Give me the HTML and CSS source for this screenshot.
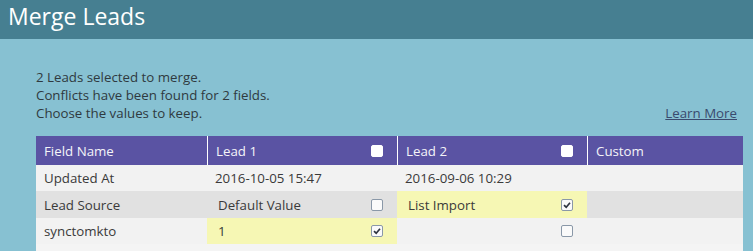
FILE: index.html
```html
<!DOCTYPE html>
<html lang="en">
<head>
<meta charset="UTF-8">
<meta name="viewport" content="width=device-width, initial-scale=1.0">
<title>Merge Leads</title>
<link rel="stylesheet" href="styles.css">
</head>
<body>
<div class="title-bar">
<h1>Merge Leads</h1>
</div>
<div class="content">
<div class="intro">
<div class="intro-text">
<p>2 Leads selected to merge.</p>
<p>Conflicts have been found for 2 fields.</p>
<p>Choose the values to keep.</p>
</div>
<a href="#" class="learn-more">Learn More</a>
</div>
<div class="merge-table">
<div class="row head">
<div class="cell">Field Name</div>
<div class="cell lead">Lead 1 <span class="cb head-cb"></span></div>
<div class="cell lead">Lead 2 <span class="cb head-cb"></span></div>
<div class="cell">Custom</div>
</div>
<div class="row">
<div class="cell">Updated At</div>
<div class="cell lead">2016-10-05 15:47</div>
<div class="cell lead">2016-09-06 10:29</div>
<div class="cell"></div>
</div>
<div class="row dark">
<div class="cell">Lead Source</div>
<div class="cell lead pick"><span class="val">Default Value</span> <span class="cb"></span></div>
<div class="cell lead pick chosen"><span class="val">List Import</span> <span class="cb checked"><svg viewBox="0 0 10 10" width="10" height="10"><path d="M2 5.2 L4.2 7.2 L8 2.8" fill="none" stroke="#2e3440" stroke-width="1.7"/></svg></span></div>
<div class="cell"></div>
</div>
<div class="row">
<div class="cell">synctomkto</div>
<div class="cell lead pick chosen"><span class="val">1</span> <span class="cb checked"><svg viewBox="0 0 10 10" width="10" height="10"><path d="M2 5.2 L4.2 7.2 L8 2.8" fill="none" stroke="#2e3440" stroke-width="1.7"/></svg></span></div>
<div class="cell lead pick"><span class="val"></span> <span class="cb"></span></div>
<div class="cell"></div>
</div>
</div>
</div>
</body>
</html>
```

FILE: styles.css
```css
body {
margin: 0;
font-family: "Open Sans", "Liberation Sans", sans-serif;
font-size: 13.3px;
line-height: 18px;
background-color: #87c1d2;
color: #2f3a40;
}

.title-bar {
background-color: #467f91;
height: 39px;
padding-left: 8px;
}

.title-bar h1 {
margin: 0;
font-size: 23px;
font-weight: normal;
line-height: 33px;
color: #fff;
}

.content {
padding: 29px 10px 0 36px;
}

.intro {
display: flex;
justify-content: space-between;
align-items: flex-end;
}

.intro p {
margin: 0;
}

.learn-more {
margin-right: 6px;
color: #3a4a6e;
text-decoration: underline;
}

.merge-table {
margin-top: 14px;
background-color: #f4f4f4;
padding-bottom: 10px;
}

.row {
display: grid;
grid-template-columns: 171px 190px 190px 156px;
height: 26px;
background-color: #f2f2f2;
color: #3a3a3a;
}

.row.dark {
background-color: #e1e1e1;
height: 27px;
}

.row.head {
height: 29px;
background-color: #5a53a3;
color: #f4f4f8;
}

.cell {
display: flex;
align-items: center;
justify-content: space-between;
padding: 0 14px 0 8px;
}

.row.head .cell + .cell {
border-left: 1px solid #fff;
}

.cell.pick .val {
padding-left: 3px;
}

.cell.chosen {
background-color: #f6f7b4;
}

.cb {
box-sizing: border-box;
width: 12px;
height: 12px;
border: 1px solid #8a98a8;
border-radius: 2px;
background-color: #fafafa;
display: flex;
align-items: center;
justify-content: center;
}

.cb.head-cb {
border-color: #fff;
background-color: #fff;
}
```
